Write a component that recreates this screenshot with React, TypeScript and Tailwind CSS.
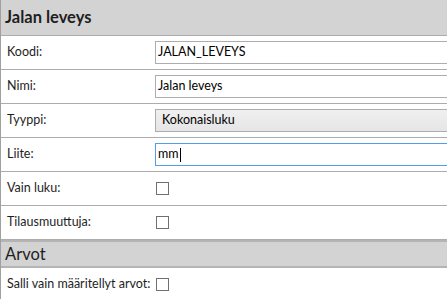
import React from 'react'

// Property editor panel: "Jalan leveys"

const font = "font-['Segoe_UI','Lato','Noto_Sans',sans-serif]"

function Row({ label, children }: { label: string; children?: React.ReactNode }) {
  return (
    <div className="flex h-[34px] items-center border-b border-[#acacac]">
      <div className="w-[154px] shrink-0 whitespace-nowrap pl-[6px] text-[12.5px] text-[#1e1e1e]">{label}</div>
      <div className="flex flex-1 items-center">{children}</div>
    </div>
  )
}

function TextBox({ value, focused }: { value: string; focused?: boolean }) {
  return (
    <div
      className={
        focused
          ? 'mr-[-20px] flex h-[23px] flex-1 items-center border border-[#569de5] bg-white pl-[2px] text-[12.5px] text-black'
          : 'mr-[-20px] flex h-[23px] flex-1 items-center border border-[#abadb3] bg-white pl-[2px] text-[12.5px] text-black'
      }
    >
      {value}
      {focused && <span className="ml-[1px] inline-block h-[14px] w-px bg-black" />}
    </div>
  )
}

function CheckBox() {
  return <div className="ml-[1px] h-[13px] w-[13px] border border-[#707070] bg-white" />
}

export default function App() {
  return (
    <div className={`h-[299px] w-[447px] overflow-hidden border-l border-[#a0a0a0] bg-white ${font}`}>
      <div className="flex h-[36px] items-center border-b border-[#acacac] bg-[#d3d3d3] pl-[4px] text-[16.5px] font-bold text-[#1e1e1e]">
        Jalan leveys
      </div>

      <Row label="Koodi:">
        <TextBox value="JALAN_LEVEYS" />
      </Row>
      <Row label="Nimi:">
        <TextBox value="Jalan leveys" />
      </Row>
      <Row label="Tyyppi:">
        <div className="mr-[-20px] flex h-[23px] flex-1 items-center border border-[#acacac] bg-gradient-to-b from-[#f0f0f0] to-[#e5e5e5] pl-[6px] text-[12.5px] text-black">
          Kokonaisluku
        </div>
      </Row>
      <Row label="Liite:">
        <TextBox value="mm" focused />
      </Row>
      <Row label="Vain luku:">
        <CheckBox />
      </Row>
      <Row label="Tilausmuuttuja:">
        <CheckBox />
      </Row>

      <div className="flex h-[28px] items-center border-y-2 border-[#b4b4b4] bg-[#d3d3d3] pl-[4px] text-[16.5px] text-[#1e1e1e]">
        Arvot
      </div>

      <div className="flex h-[33px] items-center">
        <div className="w-[154px] shrink-0 whitespace-nowrap pl-[6px] text-[12.5px] text-[#1e1e1e]">Salli vain määritellyt arvot:</div>
        <CheckBox />
      </div>
    </div>
  )
}
